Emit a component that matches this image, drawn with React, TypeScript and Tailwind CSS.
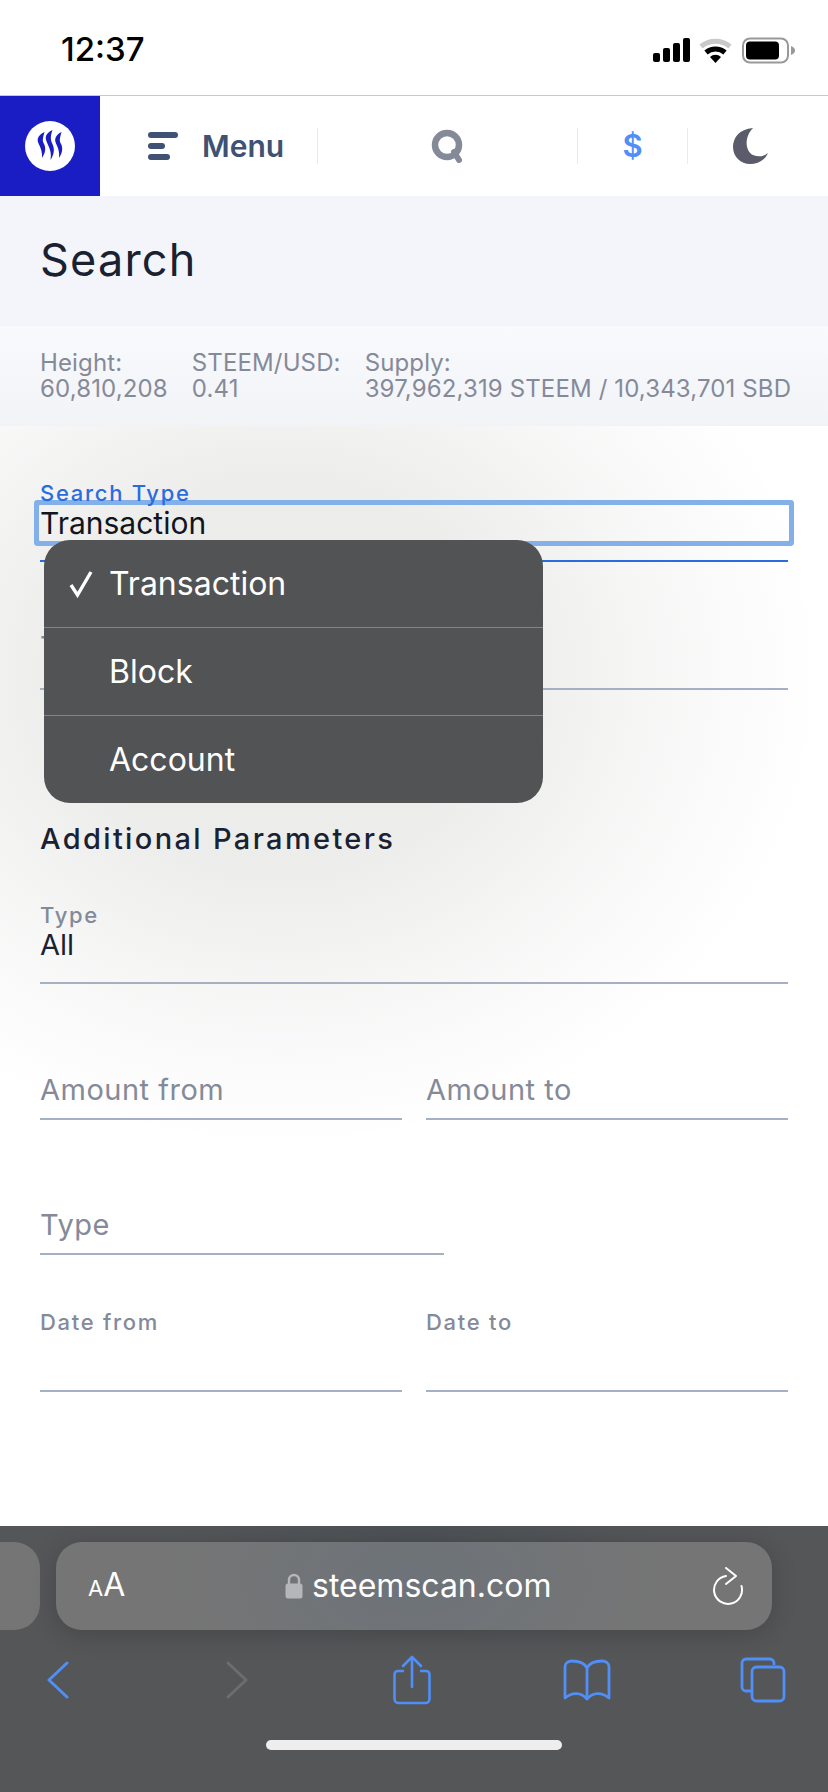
import type { ReactNode } from 'react';

const SANS = 'font-["Inter","Noto_Sans",sans-serif]';

function StatusBar() {
  return (
    <div className="flex h-[96px] shrink-0 items-start justify-between border-b border-[#c8c8cc] bg-white pl-[61px] pr-[32px]">
      <span className="mt-[29px] text-[33px] leading-[40px] font-medium text-black">12:37</span>
      <svg className="mt-[34px]" width="144" height="30" viewBox="0 0 144 30">
        <rect x="1" y="19" width="7" height="9" rx="2" fill="#000" />
        <rect x="11" y="14" width="7" height="14" rx="2" fill="#000" />
        <rect x="21" y="9" width="7" height="19" rx="2" fill="#000" />
        <rect x="31" y="4" width="7" height="24" rx="2" fill="#000" />
        <path d="M49 12.5 A23 23 0 0 1 78 12.5" fill="none" stroke="#c9c9c9" strokeWidth="5" />
        <path d="M54 18.5 A14.5 14.5 0 0 1 73 18.5" fill="none" stroke="#000" strokeWidth="5" />
        <path d="M63.5 29 L58 23 A8 8 0 0 1 69 23 Z" fill="#000" />
        <rect x="91" y="4.5" width="45" height="24" rx="7" fill="none" stroke="#999" strokeWidth="2" />
        <rect x="94" y="7.5" width="33" height="18" rx="4" fill="#000" />
        <path d="M139 12 C142 13 143 15 143 16.5 C143 18 142 20 139 21 Z" fill="#999" />
      </svg>
    </div>
  );
}

function Divider() {
  return <div className="h-[36px] w-[1px] bg-[#e9ebef]" />;
}

function NavBar() {
  return (
    <div className="relative z-20 flex h-[100px] shrink-0 items-center bg-white">
      <div className="flex h-full w-[100px] items-center justify-center bg-[#1a1dc4]">
        <svg width="50" height="50" viewBox="0 0 50 50">
          <circle cx="25" cy="25" r="25" fill="#fff" />
          <path d="M13 17 C11 22 18 26 17 37 C21 31 21 26 18.5 22 C17 19 18.5 15 19.5 11 C16 12.5 14 14.5 13 17 Z" fill="#1a1dc4" />
          <path d="M21 15 C19 21 28 27 25.5 39 C30 32 29.5 27 27 22 C25 18 26 13 27.5 9 C24 10.5 22 12.5 21 15 Z" fill="#1a1dc4" />
          <path d="M30.5 17 C28.5 22 35.5 26 34 37 C38 31 38 26 35.5 22 C34 19 35.5 15 36.5 11 C33 12.5 31.5 14.5 30.5 17 Z" fill="#1a1dc4" />
        </svg>
      </div>
      <div className="flex w-[217px] items-center justify-end">
        <div className="flex w-[169px] flex-col gap-[5px]">
          <div className="h-[6px] w-[30px] rounded-full bg-[#3f5273]" />
          <div className="h-[6px] w-[17px] rounded-full bg-[#3f5273]" />
          <div className="h-[6px] w-[22px] rounded-full bg-[#3f5273]" />
        </div>
      </div>
      <span className="absolute left-[202px] text-[30px] leading-[36px] font-semibold text-[#3f5273]">Menu</span>
      <Divider />
      <div className="flex w-[259px] items-center justify-center">
        <svg width="34" height="34" viewBox="0 0 34 34">
          <circle cx="16" cy="16" r="12" fill="none" stroke="#858a99" strokeWidth="6.5" />
          <path d="M23 23 L28 31" stroke="#858a99" strokeWidth="6" strokeLinecap="round" />
        </svg>
      </div>
      <Divider />
      <div className="flex w-[109px] items-center justify-center">
        <span className="text-[31px] leading-[36px] font-semibold text-[#4f8ff7]">$</span>
      </div>
      <Divider />
      <div className="flex w-[126px] items-center justify-center">
        <svg width="38" height="38" viewBox="0 0 38 38">
          <path d="M21 1 C7 2 1 11 1 20 C1 30 9 37 18 37 C26 37 33 33 36 26 C31 30 26 30 21 28 C13 24 12 10 21 1 Z" fill="#5a5c6b" />
        </svg>
      </div>
    </div>
  );
}

function TitleBands() {
  return (
    <>
      <div className="relative z-20 flex h-[130px] shrink-0 items-center bg-[#f3f5fa] px-[40px] pb-[2px]">
        <h1 className="text-[45px] leading-[56px] font-normal tracking-[1.2px] text-[#1a2232]">Search</h1>
      </div>
      <div className="relative z-20 flex h-[100px] shrink-0 items-center gap-[24px] whitespace-nowrap bg-gradient-to-b from-[#f9fafd] to-[#f2f3f7] pl-[40px] text-[24px] leading-[26px] tracking-[0.13px] text-[#858a99]">
        <div>
          <div>Height:</div>
          <div>60,810,208</div>
        </div>
        <div>
          <div>STEEM/USD:</div>
          <div>0.41</div>
        </div>
        <div>
          <div>Supply:</div>
          <div>397,962,319 STEEM / 10,343,701 SBD</div>
        </div>
      </div>
    </>
  );
}

function Label({ children, blue }: { children: ReactNode; blue?: boolean }) {
  return (
    <div className={`text-[22px] leading-[24px] font-medium tracking-[1.7px] ${blue ? 'text-[#2b6be0]' : 'text-[#858a99]'}`}>
      {children}
    </div>
  );
}

function Placeholder({ children, className }: { children: ReactNode; className: string }) {
  return (
    <div className={`flex h-[50px] items-center border-b-2 border-[#a3b1c2] pb-[8px] text-[29px] tracking-[0.5px] text-[#858a99] ${className}`}>
      {children}
    </div>
  );
}

function OptionsMenu() {
  return (
    <div className="absolute top-[114px] left-[44px] z-10 w-[499px] overflow-hidden rounded-[26px] bg-[#525355] text-[32px] leading-[44px] text-white">
      <div className="relative flex h-[88px] items-center border-b border-[#848587] pl-[65px]">
        <svg className="absolute left-[24px]" width="26" height="28" viewBox="0 0 26 28">
          <path d="M3 15 L9.5 25 L23 2" fill="none" stroke="#fff" strokeWidth="3.4" />
        </svg>
        Transaction
      </div>
      <div className="flex h-[88px] items-center border-b border-[#848587] pl-[65px]">Block</div>
      <div className="flex h-[87px] items-center pl-[65px]">Account</div>
    </div>
  );
}

function SearchForm() {
  return (
    <div className="relative isolate flex-1 px-[40px] pt-[55px]">
      {/* soft glow the native picker casts over the page */}
      <div className="absolute inset-0 -z-10 bg-[radial-gradient(ellipse_540px_470px_at_280px_250px,rgba(40,40,30,0.085)_40%,rgba(40,40,30,0.035)_72%,transparent)]" />
      <Label blue>Search Type</Label>
      <div className="border-b-2 border-[#2b6be0] pb-[19px]">
        <div className="-mx-[1px] flex h-[36px] items-center rounded-[1px] pl-[1px] text-[30px] text-[#11151f] ring-[5px] ring-[#84b0e9]">
          Transaction
        </div>
      </div>
      <div className="flex h-[128px] items-end border-b-2 border-[#a3b1c2] pb-[20px] text-[29px] text-[#858a99]">Transaction ID</div>
      <h2 className="mt-[129px] text-[29px] leading-[40px] font-medium tracking-[2.35px] text-[#1a2232]">Additional Parameters</h2>
      <div className="mt-[44px]">
        <Label>Type</Label>
      </div>
      <div className="border-b-2 border-[#a3b1c2] pb-[19px] text-[29px] leading-[36px] text-[#1a2232]">All</div>
      <div className="mt-[86px] flex gap-[24px]">
        <Placeholder className="flex-1">Amount from</Placeholder>
        <Placeholder className="flex-1">Amount to</Placeholder>
      </div>
      <Placeholder className="mt-[85px] w-[404px]">Type</Placeholder>
      <div className="mt-[55px] flex gap-[24px]">
        <div className="flex-1 border-b-2 border-[#a3b1c2] pb-[56px]">
          <Label>Date from</Label>
        </div>
        <div className="flex-1 border-b-2 border-[#a3b1c2] pb-[56px]">
          <Label>Date to</Label>
        </div>
      </div>
      <OptionsMenu />
    </div>
  );
}

function SafariBar() {
  return (
    <div className="relative z-20 flex h-[266px] shrink-0 flex-col bg-[#555658] bg-[radial-gradient(ellipse_260px_110px_at_50%_20px,#4c5156,transparent)]">
      <div className="mt-[16px] flex h-[88px] gap-[16px]">
        <div className="w-[40px] rounded-r-[26px] bg-[#757575]" />
        <div className="flex w-[716px] items-center rounded-[26px] bg-[#757575] bg-[radial-gradient(ellipse_240px_150px_at_50%_40%,#6d7379,transparent)] pl-[32px] pr-[28px] shadow-[0_4px_24px_rgba(0,0,0,0.18)]">
          <span className="flex w-[197px] items-baseline text-white">
            <span className="text-[22px] leading-[30px]">A</span>
            <span className="text-[32px] leading-[30px]">A</span>
          </span>
          <span className="flex items-center gap-[9px] text-[32px] leading-[44px] text-white">
            <svg width="18" height="26" viewBox="0 0 18 26">
              <path d="M4 12 V7 A5 5 0 0 1 14 7 V12" fill="none" stroke="#b5b6ba" strokeWidth="2.4" />
              <rect x="0.5" y="10.5" width="17" height="15" rx="2.5" fill="#b5b6ba" />
            </svg>
            steemscan.com
          </span>
          <svg className="ml-auto" width="32" height="38" viewBox="0 0 32 38">
            <path d="M14 9 A14 14 0 1 0 29.5 19" fill="none" stroke="#fff" strokeWidth="2" strokeLinecap="round" />
            <path d="M14 1 L24 9 L14 17" fill="none" stroke="#fff" strokeWidth="2" strokeLinecap="round" strokeLinejoin="round" />
          </svg>
        </div>
      </div>
      <div className="mt-[24px] flex h-[52px] items-center pl-[47px]">
        <svg width="22" height="38" viewBox="0 0 22 38">
          <path d="M20 2 L2 19 L20 36" fill="none" stroke="#4f8ff7" strokeWidth="3" strokeLinecap="round" strokeLinejoin="round" />
        </svg>
        <svg className="ml-[157px]" width="22" height="38" viewBox="0 0 22 38">
          <path d="M2 2 L20 19 L2 36" fill="none" stroke="#6c6d6f" strokeWidth="3" strokeLinecap="round" strokeLinejoin="round" />
        </svg>
        <svg className="ml-[145px]" width="38" height="50" viewBox="0 0 38 50">
          <path d="M11 16 H5 A3.5 3.5 0 0 0 1.5 19.5 V44 A4 4 0 0 0 5.5 48 H32.5 A4 4 0 0 0 36.5 44 V19.5 A3.5 3.5 0 0 0 33 16 H27" fill="none" stroke="#4f8ff7" strokeWidth="2.6" />
          <path d="M19 32 V2 M10 11 L19 2 L28 11" fill="none" stroke="#4f8ff7" strokeWidth="2.6" strokeLinecap="round" strokeLinejoin="round" />
        </svg>
        <svg className="ml-[132px]" width="48" height="42" viewBox="0 0 48 42">
          <path d="M24 9 C21 3 15 2 9 2 C5 2 2 4 2 8 V39 C9 33 18 33 24 40 C30 33 39 33 46 39 V8 C46 4 43 2 39 2 C33 2 27 3 24 9 Z M24 9 V40" fill="none" stroke="#4f8ff7" strokeWidth="2.8" strokeLinejoin="round" />
        </svg>
        <svg className="ml-[129px]" width="46" height="46" viewBox="0 0 46 46">
          <path d="M34 8 V6 A4 4 0 0 0 30 2 H6 A4 4 0 0 0 2 6 V30 A4 4 0 0 0 6 34 H11" fill="none" stroke="#4f8ff7" strokeWidth="2.8" />
          <rect x="12" y="10" width="32" height="34" rx="4.5" fill="none" stroke="#4f8ff7" strokeWidth="2.8" />
        </svg>
      </div>
      <div className="mt-[34px] flex justify-center">
        <div className="h-[10px] w-[296px] rounded-full bg-[#eeeeee]" />
      </div>
    </div>
  );
}

export default function App() {
  return (
    <div className={`flex h-[1792px] w-[828px] flex-col overflow-hidden bg-white ${SANS}`}>
      <StatusBar />
      <NavBar />
      <TitleBands />
      <SearchForm />
      <SafariBar />
    </div>
  );
}
